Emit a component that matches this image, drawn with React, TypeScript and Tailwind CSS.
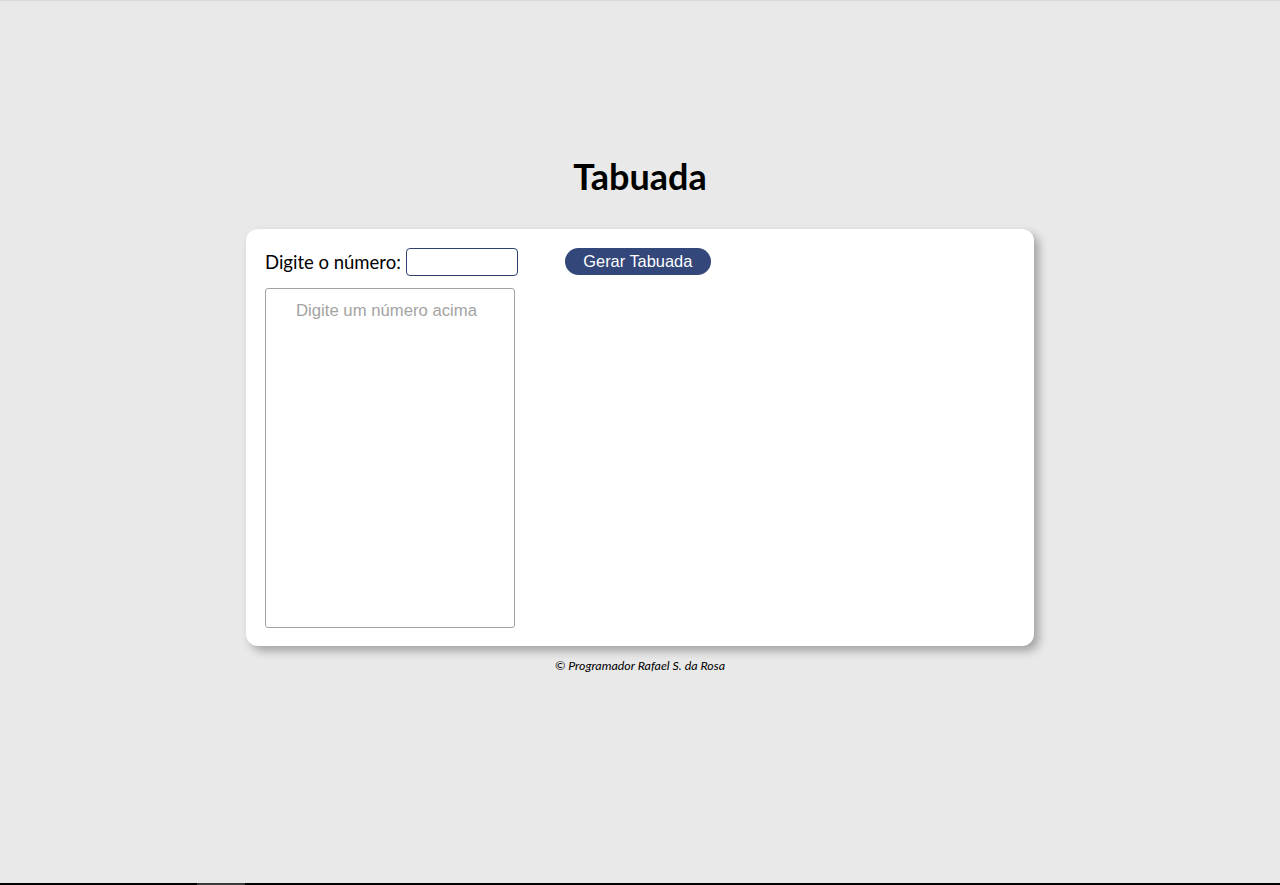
import { useState } from "react";

export default function App() {
  const [numero, setNumero] = useState("");
  const [linhas, setLinhas] = useState<string[]>([]);

  function gerar() {
    const n = Number(numero);
    if (numero === "" || isNaN(n)) {
      setLinhas([]);
      return;
    }
    const out: string[] = [];
    for (let i = 1; i <= 10; i++) out.push(`${n} x ${i} = ${n * i}`);
    setLinhas(out);
  }

  return (
    <div className="flex h-[885px] flex-col overflow-hidden border-t border-[#d9d9d9] bg-[#e9e9e9]">
      <div className="flex flex-1 flex-col items-center">
        <h1 className="mt-[154px] text-[36px] font-bold leading-[42px] text-black [font-family:Lato,'Noto_Sans',sans-serif]">
          Tabuada
        </h1>

        <section className="mt-[32px] flex w-[788px] flex-col gap-[12px] rounded-[12px] bg-white px-[19px] pb-[18px] pt-[19px] shadow-[5px_5px_10px_rgba(0,0,0,0.3)]">
          <div className="flex items-start">
            <label className="text-[18.5px] leading-[28px] text-black [font-family:Lato,'Noto_Sans',sans-serif]">
              Digite o número:
            </label>
            <input
              type="number"
              value={numero}
              onChange={(e) => setNumero(e.target.value)}
              className="ml-[5px] h-[28px] w-[112px] rounded-[4px] border border-[#2f4170] bg-white px-1 outline-none"
            />
            <button
              onClick={gerar}
              className="ml-[47px] h-[27px] w-[146px] rounded-full bg-[#34477a] text-[16.4px] leading-[27px] text-white [font-family:'Liberation_Sans',Arial,sans-serif]"
            >
              Gerar Tabuada
            </button>
          </div>

          <div className="h-[340px] w-[250px] overflow-auto rounded-[3px] border border-[#a3a3a3] pr-[7px] pt-[12px] text-center text-[16.7px] leading-[20px] [font-family:'Liberation_Sans',Arial,sans-serif]">
            {linhas.length === 0 ? (
              <div className="text-[#a3a3a3]">Digite um número acima</div>
            ) : (
              linhas.map((l) => (
                <div key={l} className="text-black">
                  {l}
                </div>
              ))
            )}
          </div>
        </section>

        <footer className="mt-[12px] text-[12.4px] italic leading-[16px] text-black [font-family:Lato,'Noto_Sans',sans-serif]">
          © Programador Rafael S. da Rosa
        </footer>
      </div>
      <div className="flex h-[2px] bg-black">
        <div className="ml-[197px] w-[48px] bg-[#3a3a3a]" />
      </div>
    </div>
  );
}
